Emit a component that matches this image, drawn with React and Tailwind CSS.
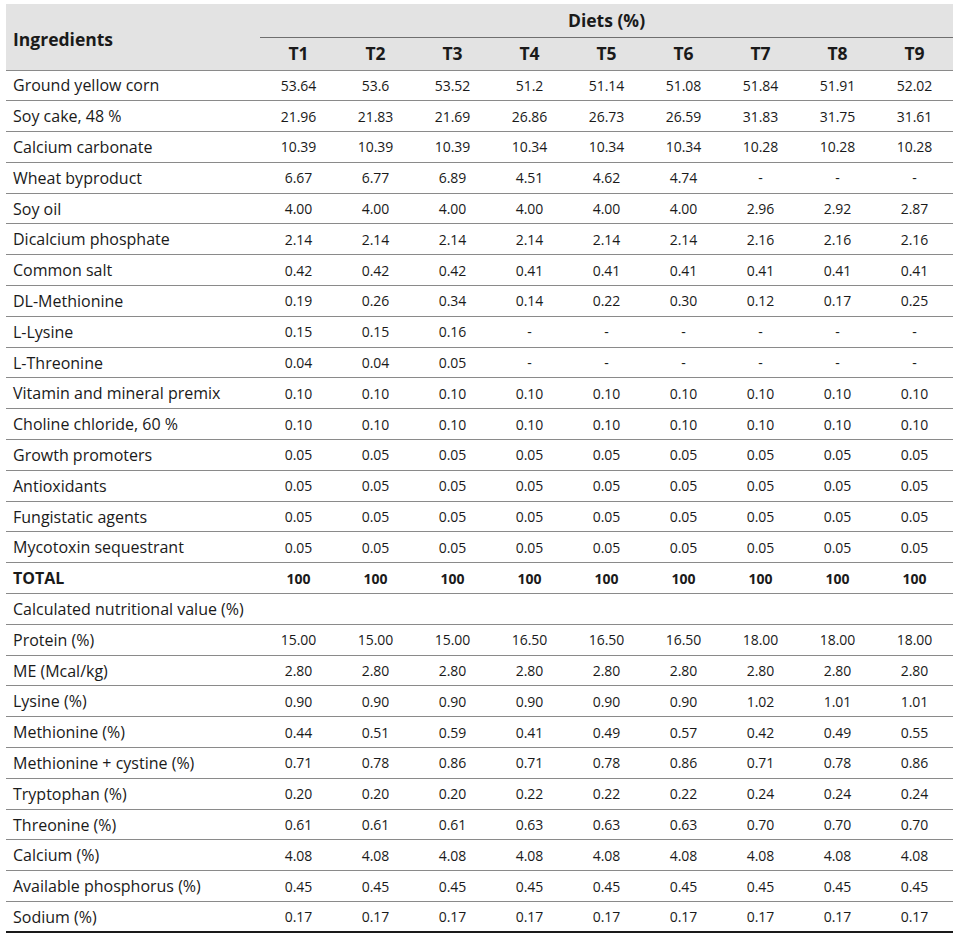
import React from 'react';

const diets = ['T1', 'T2', 'T3', 'T4', 'T5', 'T6', 'T7', 'T8', 'T9'];

const rows = [
    ['Ground yellow corn', '53.64', '53.6', '53.52', '51.2', '51.14', '51.08', '51.84', '51.91', '52.02'],
    ['Soy cake, 48 %', '21.96', '21.83', '21.69', '26.86', '26.73', '26.59', '31.83', '31.75', '31.61'],
    ['Calcium carbonate', '10.39', '10.39', '10.39', '10.34', '10.34', '10.34', '10.28', '10.28', '10.28'],
    ['Wheat byproduct', '6.67', '6.77', '6.89', '4.51', '4.62', '4.74', '-', '-', '-'],
    ['Soy oil', '4.00', '4.00', '4.00', '4.00', '4.00', '4.00', '2.96', '2.92', '2.87'],
    ['Dicalcium phosphate', '2.14', '2.14', '2.14', '2.14', '2.14', '2.14', '2.16', '2.16', '2.16'],
    ['Common salt', '0.42', '0.42', '0.42', '0.41', '0.41', '0.41', '0.41', '0.41', '0.41'],
    ['DL-Methionine', '0.19', '0.26', '0.34', '0.14', '0.22', '0.30', '0.12', '0.17', '0.25'],
    ['L-Lysine', '0.15', '0.15', '0.16', '-', '-', '-', '-', '-', '-'],
    ['L-Threonine', '0.04', '0.04', '0.05', '-', '-', '-', '-', '-', '-'],
    ['Vitamin and mineral premix', '0.10', '0.10', '0.10', '0.10', '0.10', '0.10', '0.10', '0.10', '0.10'],
    ['Choline chloride, 60 %', '0.10', '0.10', '0.10', '0.10', '0.10', '0.10', '0.10', '0.10', '0.10'],
    ['Growth promoters', '0.05', '0.05', '0.05', '0.05', '0.05', '0.05', '0.05', '0.05', '0.05'],
    ['Antioxidants', '0.05', '0.05', '0.05', '0.05', '0.05', '0.05', '0.05', '0.05', '0.05'],
    ['Fungistatic agents', '0.05', '0.05', '0.05', '0.05', '0.05', '0.05', '0.05', '0.05', '0.05'],
    ['Mycotoxin sequestrant', '0.05', '0.05', '0.05', '0.05', '0.05', '0.05', '0.05', '0.05', '0.05'],
];

const nutrition = [
    ['Protein (%)', '15.00', '15.00', '15.00', '16.50', '16.50', '16.50', '18.00', '18.00', '18.00'],
    ['ME (Mcal/kg)', '2.80', '2.80', '2.80', '2.80', '2.80', '2.80', '2.80', '2.80', '2.80'],
    ['Lysine (%)', '0.90', '0.90', '0.90', '0.90', '0.90', '0.90', '1.02', '1.01', '1.01'],
    ['Methionine (%)', '0.44', '0.51', '0.59', '0.41', '0.49', '0.57', '0.42', '0.49', '0.55'],
    ['Methionine + cystine (%)', '0.71', '0.78', '0.86', '0.71', '0.78', '0.86', '0.71', '0.78', '0.86'],
    ['Tryptophan (%)', '0.20', '0.20', '0.20', '0.22', '0.22', '0.22', '0.24', '0.24', '0.24'],
    ['Threonine (%)', '0.61', '0.61', '0.61', '0.63', '0.63', '0.63', '0.70', '0.70', '0.70'],
    ['Calcium (%)', '4.08', '4.08', '4.08', '4.08', '4.08', '4.08', '4.08', '4.08', '4.08'],
    ['Available phosphorus (%)', '0.45', '0.45', '0.45', '0.45', '0.45', '0.45', '0.45', '0.45', '0.45'],
    ['Sodium (%)', '0.17', '0.17', '0.17', '0.17', '0.17', '0.17', '0.17', '0.17', '0.17'],
];

const DataRow = ({ row, bold, last }) => (
    <tr className={last ? 'border-b-2 border-[#1a1a1a]' : 'border-b border-[#8a8a8a]'}>
        <td className={`h-[30.8px] pl-[7px] text-[16px] ${bold ? 'font-bold' : ''}`}>{row[0]}</td>
        {row.slice(1).map((v, i) => (
            <td key={i} className={`text-center text-[14px] ${bold ? 'font-bold' : ''}`}>{v}</td>
        ))}
    </tr>
);

const App = () => {
    return (
        <div className="min-h-screen bg-white pt-[4px] pl-[6px]" style={{ fontFamily: '"Open Sans", "Liberation Sans", sans-serif' }}>
            <table className="table-fixed border-collapse w-[947px] text-[#1a1a1a]">
                <colgroup>
                    <col className="w-[254px]" />
                    {diets.map((d) => <col key={d} className="w-[77px]" />)}
                </colgroup>
                <thead className="bg-[#e3e3e3]">
                    <tr>
                        <th rowSpan={2} className="text-left align-middle pl-[7px] pt-[5px] text-[17.5px] font-bold border-b border-[#8a8a8a]">
                            Ingredients
                        </th>
                        <th colSpan={9} className="h-[33px] text-center text-[17.5px] font-bold border-b border-[#6f6f6f]">
                            Diets (%)
                        </th>
                    </tr>
                    <tr className="border-b border-[#8a8a8a]">
                        {diets.map((d) => (
                            <th key={d} className="h-[33px] text-center text-[17.5px] font-bold">{d}</th>
                        ))}
                    </tr>
                </thead>
                <tbody>
                    {rows.map((r) => <DataRow key={r[0]} row={r} />)}
                    <DataRow row={['TOTAL', '100', '100', '100', '100', '100', '100', '100', '100', '100']} bold />
                    <tr className="border-b border-[#8a8a8a]">
                        <td colSpan={10} className="h-[30.8px] pl-[7px] text-[16px]">Calculated nutritional value (%)</td>
                    </tr>
                    {nutrition.map((r, i) => <DataRow key={r[0]} row={r} last={i === nutrition.length - 1} />)}
                </tbody>
            </table>
        </div>
    );
};

export default App;
